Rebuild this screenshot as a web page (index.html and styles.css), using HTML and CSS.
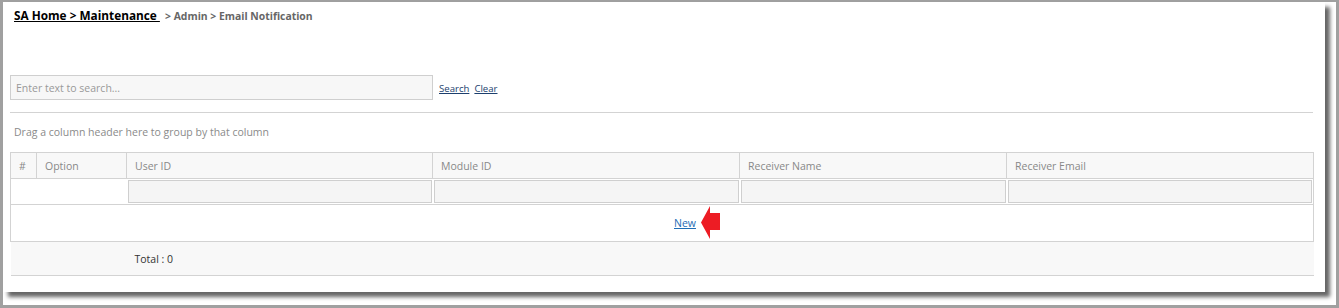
FILE: index.html
```html
<!DOCTYPE html>
<html lang="en">
<head>
    <meta charset="UTF-8">
    <title>Email Notification</title>
    <link rel="stylesheet" href="styles.css">
</head>
<body>
    <div class="frame">
        <div class="panel">
            <div class="crumbs">
                <a class="crumb-main" href="#">SA Home &gt; Maintenance&nbsp;</a>
                <span class="crumb-rest">&gt; Admin &gt; Email Notification</span>
            </div>

            <div class="search-bar">
                <input class="search-box" type="text" placeholder="Enter text to search...">
                <a class="small-link" href="#">Search</a>
                <a class="small-link" href="#">Clear</a>
            </div>

            <div class="group-panel">Drag a column header here to group by that column</div>

            <table class="grid">
                <colgroup>
                    <col style="width: 26px">
                    <col style="width: 90px">
                    <col style="width: 306px">
                    <col style="width: 307px">
                    <col style="width: 267px">
                    <col style="width: 307px">
                </colgroup>
                <tr class="head-row">
                    <th>#</th>
                    <th>Option</th>
                    <th>User ID</th>
                    <th>Module ID</th>
                    <th>Receiver Name</th>
                    <th>Receiver Email</th>
                </tr>
                <tr class="filter-row">
                    <td colspan="2"></td>
                    <td><input class="filter-box" type="text"></td>
                    <td><input class="filter-box" type="text"></td>
                    <td><input class="filter-box" type="text"></td>
                    <td><input class="filter-box" type="text"></td>
                </tr>
                <tr class="empty-row">
                    <td colspan="6">
                        <span class="new-wrap">
                            <a class="new-link" href="#">New</a>
                            <svg class="arrow" width="19" height="34" viewBox="0 0 19 34">
                                <path d="M0 16.5 L9 0 L9 7 L19 7 L19 24 L9 24 L9 33 Z" fill="#ed1c24"/>
                            </svg>
                        </span>
                    </td>
                </tr>
                <tr class="foot-row">
                    <td colspan="2"></td>
                    <td colspan="4">Total : 0</td>
                </tr>
            </table>
        </div>
    </div>
</body>
</html>
```
FILE: styles.css
```css
body {
    margin: 0;
    padding: 0;
    background-color: white;
    font-family: "Open Sans", "Noto Sans", Arial, sans-serif;
}
.frame {
    height: 303px;
    border-top: 2px solid #a0a0a0;
    border-left: 3px solid #a0a0a0;
    border-right: 3px solid #a0a0a0;
    border-bottom: 3px solid #a0a0a0;
    background-color: white;
}
.panel {
    width: 1303px;
    height: 290px;
    margin-right: 11px;
    padding: 0 12px 0 7px;
    background-color: white;
    box-shadow: 5px 5px 4px #666;
}
.crumbs {
    padding: 1px 0 0 4px;
    height: 72px;
}
.crumb-main {
    color: black;
    font-weight: bold;
    font-size: 11.8px;
    text-decoration: underline;
}
.crumb-rest {
    color: #666;
    font-weight: bold;
    font-size: 10.4px;
    margin-left: 1px;
}
.search-bar {
    display: flex;
    align-items: center;
    height: 25px;
    padding-bottom: 12px;
    border-bottom: 1px solid #d3d3d3;
}
.search-box {
    box-sizing: border-box;
    width: 423px;
    height: 25px;
    margin: 0 6px 0 0;
    padding: 0 5px;
    border: 1px solid #cfcfcf;
    background-color: #f7f7f7;
    font-family: inherit;
    font-size: 10.5px;
    outline: none;
}
.search-box::placeholder {
    color: #999;
}
.small-link {
    color: #1c3f6e;
    font-size: 9.6px;
    margin-right: 5px;
    padding-top: 1px;
}
.group-panel {
    color: #8a8a8a;
    font-size: 10.5px;
    padding: 12px 0 0 4px;
    height: 27px;
}
.grid {
    width: 1303px;
    border-collapse: collapse;
    table-layout: fixed;
    font-size: 10.5px;
}
.grid th {
    height: 25px;
    padding: 0 8px;
    text-align: left;
    font-weight: normal;
    color: #888;
    background-color: #f8f8f8;
    border: 1px solid #d3d3d3;
}
.filter-row td {
    height: 25px;
    padding: 0 1px;
    border: 1px solid #d3d3d3;
    border-left: none;
    border-right: none;
}
.filter-row td:first-child {
    border-left: 1px solid #d3d3d3;
}
.filter-row td:last-child {
    border-right: 1px solid #d3d3d3;
}
.filter-box {
    display: block;
    box-sizing: border-box;
    width: 100%;
    height: 23px;
    margin: 0;
    border: 1px solid #cfcfcf;
    background-color: #f5f5f5;
    outline: none;
}
.empty-row td {
    height: 36px;
    padding: 0;
    text-align: center;
    border: 1px solid #d3d3d3;
}
.new-wrap {
    display: inline-flex;
    align-items: center;
    margin-left: 70px;
}
.new-link {
    color: #1f6db5;
    font-size: 10.5px;
}
.arrow {
    display: block;
    margin-left: 5px;
}
.foot-row td {
    height: 33px;
    padding: 0 8px;
    color: #333;
    background-color: #f8f8f8;
    border-top: 1px solid #d3d3d3;
    border-bottom: 1px solid #d3d3d3;
}
```
